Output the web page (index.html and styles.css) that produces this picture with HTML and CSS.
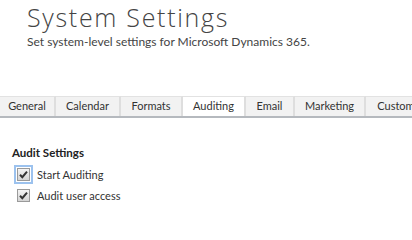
FILE: index.html
```html
<!DOCTYPE html>
<html>
<head>
<meta charset="utf-8">
<link rel="stylesheet" href="styles.css">
</head>
<body>
<header class="header">
  <h1 class="title">System Settings</h1>
  <p class="subtitle">Set system-level settings for Microsoft Dynamics 365.</p>
</header>
<nav class="tabs">
  <div class="tab t-general">General</div>
  <div class="tab t-calendar">Calendar</div>
  <div class="tab t-formats">Formats</div>
  <div class="tab active t-auditing">Auditing</div>
  <div class="tab t-email">Email</div>
  <div class="tab t-marketing">Marketing</div>
  <div class="tab t-custom">Customization</div>
</nav>
<section class="section">
  <h2 class="section-title">Audit Settings</h2>
  <label class="row">
    <span class="check focus"><svg viewBox="0 0 13 13" width="13" height="13"><path d="M3 6.8 L5.3 9.2 L10 3.6" fill="none" stroke="#333" stroke-width="2"/></svg></span>
    <span class="label">Start Auditing</span>
  </label>
  <label class="row">
    <span class="check"><svg viewBox="0 0 13 13" width="13" height="13"><path d="M3 6.8 L5.3 9.2 L10 3.6" fill="none" stroke="#333" stroke-width="2"/></svg></span>
    <span class="label">Audit user access</span>
  </label>
</section>
</body>
</html>
```
FILE: styles.css
```css
html, body { margin: 0; padding: 0; background: #fff; }
body {
  width: 412px; height: 224px; overflow: hidden;
  font-family: "Lato", "Open Sans", sans-serif;
  color: #444;
}
.header { padding: 2.3px 0 0 27px; }
.title {
  margin: 0;
  font-family: "Open Sans", sans-serif;
  font-weight: 300;
  font-size: 25px;
  line-height: 30px;
  color: #444;
  letter-spacing: 1.7px;
}
.subtitle {
  margin: 2px 0 0 0;
  font-size: 12px;
  line-height: 16px;
  color: #444;
}
.tabs {
  margin-top: 46px;
  display: flex;
  border-bottom: 2px solid #b5b9be;
  height: 20px;
  overflow: hidden;
  white-space: nowrap;
}
.tab {
  flex: none;
  box-sizing: border-box;
  height: 20px;
  background: #f2f2f2;
  border-top: 1px solid #e2e2e2;
  border-right: 2px solid #dedede;
  font-size: 11px;
  line-height: 18px;
  color: #333;
  text-align: center;
}
.tab.active { background: #fff; }
.t-general { width: 56px; }
.t-calendar { width: 65px; }
.t-formats { width: 62px; }
.t-auditing { width: 63px; }
.t-email { width: 49px; }
.t-marketing { width: 71px; }
.t-custom { width: 92px; border-right: 0; }
.section { padding: 27px 0 0 12px; }
.section-title {
  margin: 0 0 3px 0;
  font-size: 11.5px;
  font-weight: 700;
  line-height: 16px;
  color: #222;
}
.row {
  display: flex;
  align-items: center;
  height: 21px;
}
.check {
  box-sizing: border-box;
  width: 13px; height: 13px;
  margin-left: 5px;
  margin-right: 7px;
  border: 1px solid #9a9a9a;
  background: linear-gradient(#f4f4f4, #d4d4d4);
  display: flex;
}
.check svg { margin: -1px; }
.check.focus { outline: 2px solid #9cc2ee; outline-offset: 1px; }
.label { font-size: 11px; color: #333; }
```
